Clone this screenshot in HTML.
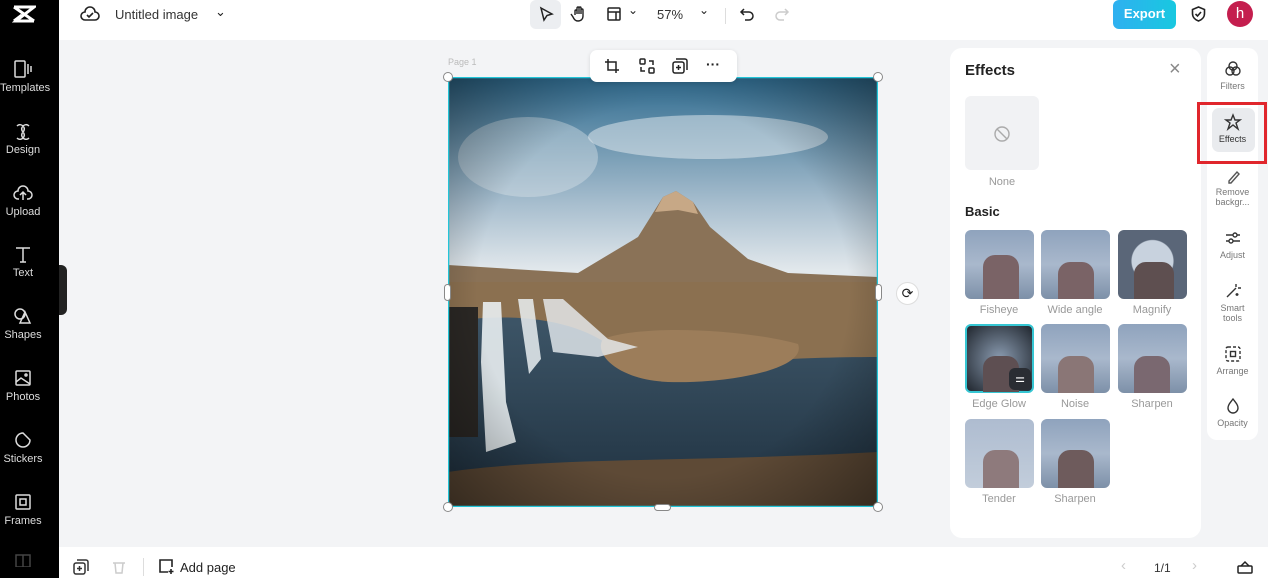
<!DOCTYPE html>
<html><head><style>
*{margin:0;padding:0;box-sizing:border-box}
body{width:1268px;height:578px;overflow:hidden;background:#f3f4f6;font-family:"Liberation Sans",sans-serif;position:relative;color:#222}
.abs{position:absolute}
.side{left:0;top:0;width:59px;height:578px;background:#000}
.si{position:absolute;left:0;width:46px;text-align:center;color:#ddd;font-size:11px}
.si svg{display:block;margin:0 auto 4px}
.top{left:59px;top:0;width:1209px;height:40px;background:#fff}
.bot{left:59px;top:547px;width:1209px;height:31px;background:#fff}
.panel{left:950px;top:48px;width:251px;height:490px;background:#fff;border-radius:12px}
.rail{left:1207px;top:48px;width:51px;height:392px;background:#fff;border-radius:10px}
.ri{position:absolute;left:1207px;width:51px;text-align:center;font-size:9px;color:#777;line-height:10px}
.ri svg{display:block;margin:0 auto 3px}
.th{position:absolute;width:69px;height:69px;border-radius:6px;overflow:hidden;background:linear-gradient(#8fa3bd,#a9b8cc 50%,#7d90a8)}
.lb{position:absolute;width:80px;text-align:center;font-size:11px;color:#999}
</style></head><body>
<div class="abs side"></div>
<svg class="abs" style="left:12px;top:4px" width="24" height="20" viewBox="0 0 24 20"><path d="M2 3h20L4 17h18M2 3l20 14M2 17l8-6" stroke="#fff" stroke-width="3" fill="none"/></svg>
<div class="si" style="top:60px"><svg width="20" height="18" viewBox="0 0 20 18" fill="none" stroke="#ddd" stroke-width="1.5"><rect x="2" y="1" width="10" height="16" rx="1"/><path d="M15 4v10M18 6v6"/></svg>Templates</div>
<div class="si" style="top:122px"><svg width="20" height="18" viewBox="0 0 20 18" fill="none" stroke="#ddd" stroke-width="1.5"><path d="M4 4c4-4 10 2 6 6s2 10 6 6M16 4C12 0 6 6 10 10s-2 10-6 6"/></svg>Design</div>
<div class="si" style="top:184px"><svg width="20" height="18" viewBox="0 0 20 18" fill="none" stroke="#ddd" stroke-width="1.5"><path d="M6 15H5a4 4 0 010-8 5 5 0 0110 0 4 4 0 010 8h-1M10 16V9M7 11l3-3 3 3"/></svg>Upload</div>
<div class="si" style="top:245px"><svg width="20" height="18" viewBox="0 0 20 18" fill="none" stroke="#ddd" stroke-width="1.5"><path d="M3 3h14M10 3v14M7 17h6"/></svg>Text</div>
<div class="si" style="top:307px"><svg width="20" height="18" viewBox="0 0 20 18" fill="none" stroke="#ddd" stroke-width="1.5"><circle cx="7" cy="7" r="5"/><path d="M12 5l5 11H7z"/></svg>Shapes</div>
<div class="si" style="top:369px"><svg width="20" height="18" viewBox="0 0 20 18" fill="none" stroke="#ddd" stroke-width="1.5"><rect x="3" y="2" width="14" height="14" rx="1"/><path d="M3 13l5-4 9 6"/><circle cx="13" cy="6" r="1"/></svg>Photos</div>
<div class="si" style="top:431px"><svg width="20" height="18" viewBox="0 0 20 18" fill="none" stroke="#ddd" stroke-width="1.5"><path d="M10 2a7 7 0 107 7l-7-7z"/></svg>Stickers</div>
<div class="si" style="top:493px"><svg width="20" height="18" viewBox="0 0 20 18" fill="none" stroke="#ddd" stroke-width="1.5"><rect x="3" y="2" width="14" height="14" rx="1"/><rect x="7" y="6" width="6" height="6"/></svg>Frames</div>
<svg class="abs" style="left:14px;top:553px" width="18" height="14" viewBox="0 0 18 14" fill="none" stroke="#444" stroke-width="1.5"><rect x="2" y="2" width="14" height="12"/><path d="M9 2v12"/></svg>
<div class="abs" style="left:59px;top:265px;width:8px;height:50px;background:#222;border-radius:0 6px 6px 0"></div>

<div class="abs top"></div>
<svg class="abs" style="left:80px;top:5px" width="20" height="18" viewBox="0 0 20 18" fill="none" stroke="#222" stroke-width="1.6"><path d="M6 15H5a4 4 0 010-8 5 5 0 0110 0 4 4 0 010 8zM7 10l2 2 4-4"/></svg>
<div class="abs" style="left:115px;top:7px;font-size:13px;color:#333">Untitled image</div>
<div class="abs" style="left:215px;top:4px;font-size:13px">⌄</div>
<div class="abs" style="left:530px;top:0;width:31px;height:29px;background:#eceef1;border-radius:6px"></div>
<svg class="abs" style="left:538px;top:6px" width="16" height="16" viewBox="0 0 16 16" fill="none" stroke="#222" stroke-width="1.5"><path d="M3 2l11 6-5 1.5L6 14z"/></svg>
<svg class="abs" style="left:570px;top:5px" width="18" height="18" viewBox="0 0 18 18" fill="none" stroke="#222" stroke-width="1.4"><path d="M5 10V6a1 1 0 012 0v3V3a1 1 0 012 0v6V3a1 1 0 012 0v6V5a1 1 0 012 0v6c0 3-2 5-5 5s-4-2-5-4l-2-3"/></svg>
<svg class="abs" style="left:606px;top:6px" width="16" height="16" viewBox="0 0 16 16" fill="none" stroke="#222" stroke-width="1.5"><rect x="2" y="2" width="12" height="12" rx="1"/><path d="M2 6h12M10 6v8"/></svg>
<div class="abs" style="left:628px;top:3px;font-size:12px">⌄</div>
<div class="abs" style="left:657px;top:7px;font-size:13px;color:#333">57%</div>
<div class="abs" style="left:699px;top:3px;font-size:12px">⌄</div>
<div class="abs" style="left:725px;top:8px;width:1px;height:16px;background:#ddd"></div>
<svg class="abs" style="left:739px;top:6px" width="16" height="16" viewBox="0 0 16 16" fill="none" stroke="#222" stroke-width="1.5"><path d="M5 3L2 6l3 3M2 6h8a4 4 0 010 8H6"/></svg>
<svg class="abs" style="left:774px;top:6px" width="16" height="16" viewBox="0 0 16 16" fill="none" stroke="#ccc" stroke-width="1.5"><path d="M11 3l3 3-3 3M14 6H6a4 4 0 000 8h4"/></svg>
<div class="abs" style="left:1113px;top:0;width:63px;height:29px;background:linear-gradient(90deg,#2fb0f0,#18c8e0);border-radius:6px;color:#fff;font-weight:bold;font-size:13px;text-align:center;line-height:28px">Export</div>
<svg class="abs" style="left:1190px;top:5px" width="17" height="18" viewBox="0 0 17 18" fill="none" stroke="#222" stroke-width="1.6"><path d="M8.5 2l6 2.5v4c0 4-3 6.5-6 7.5-3-1-6-3.5-6-7.5v-4zM5.5 9l2 2 3.5-4"/></svg>
<div class="abs" style="left:1227px;top:1px;width:26px;height:26px;border-radius:50%;background:#c41e4e;color:#fff;font-size:15px;text-align:center;line-height:25px">h</div>

<div class="abs" style="left:448px;top:57px;font-size:9px;color:#bbb">Page 1</div>
<svg class="abs" style="left:448px;top:77px" width="430" height="430" viewBox="0 0 430 430">
<defs><linearGradient id="sky" x1="0" y1="0" x2="0" y2="1"><stop offset="0" stop-color="#2f6b8f"/><stop offset=".3" stop-color="#a9bfcf"/><stop offset=".45" stop-color="#e2e8ec"/></linearGradient>
<linearGradient id="wat" x1="0" y1="0" x2="0" y2="1"><stop offset="0" stop-color="#3d5567"/><stop offset="1" stop-color="#1f3140"/></linearGradient>
<radialGradient id="vig" cx=".5" cy=".5" r=".72"><stop offset=".6" stop-color="#000" stop-opacity="0"/><stop offset="1" stop-color="#000" stop-opacity=".45"/></radialGradient></defs>
<rect width="430" height="430" fill="url(#sky)"/>
<ellipse cx="260" cy="60" rx="120" ry="22" fill="#e8eef2" opacity=".5"/>
<ellipse cx="80" cy="80" rx="70" ry="40" fill="#dfe7ec" opacity=".4"/>
<path d="M0 188L130 196 190 160 215 120 228 114 245 125 262 150 300 182 340 196 430 200V430H0z" fill="#8a7257"/>
<path d="M207 135l8-15 13-6 17 11 5 12-20-4z" fill="#c7a886"/>
<path d="M0 205h430v225H0z" fill="#8b7050"/>
<path d="M0 245c60-10 130-5 170 30 30 25 100 5 260 5V430H0z" fill="url(#wat)"/>
<path d="M155 262c40-15 140-10 195 5 10 25-70 40-130 38-50-2-75-28-65-43z" fill="#9c7d5a"/>
<path d="M35 225h18l5 100 10 40-30 10-5-90z" fill="#e9eef1" opacity=".9"/>
<path d="M70 222h15l8 60-12 15z" fill="#e9eef1" opacity=".85"/>
<path d="M95 222h20l45 40 30 8-40 10-45-5z" fill="#e9eef1" opacity=".8"/>
<path d="M0 230h30v130H0z" fill="#2a2724"/>
<path d="M0 395c100-15 250-10 430-20V430H0z" fill="#5e4a36"/>
<rect width="430" height="430" fill="url(#vig)"/>
<rect x=".5" y=".5" width="429" height="429" fill="none" stroke="#22c5d8" stroke-width="1.5"/>
</svg>
<div class="abs" style="left:443px;top:72px;width:10px;height:10px;border-radius:50%;background:#fff;border:1px solid #888"></div>
<div class="abs" style="left:873px;top:72px;width:10px;height:10px;border-radius:50%;background:#fff;border:1px solid #888"></div>
<div class="abs" style="left:443px;top:502px;width:10px;height:10px;border-radius:50%;background:#fff;border:1px solid #888"></div>
<div class="abs" style="left:873px;top:502px;width:10px;height:10px;border-radius:50%;background:#fff;border:1px solid #888"></div>
<div class="abs" style="left:444px;top:284px;width:7px;height:17px;border-radius:4px;background:#fff;border:1px solid #888"></div>
<div class="abs" style="left:875px;top:284px;width:7px;height:17px;border-radius:4px;background:#fff;border:1px solid #888"></div>
<div class="abs" style="left:654px;top:504px;width:17px;height:7px;border-radius:4px;background:#fff;border:1px solid #888"></div>
<div class="abs" style="left:896px;top:282px;width:23px;height:23px;border-radius:50%;background:#fff;border:1px solid #ddd;text-align:center;font-size:14px;line-height:21px">⟳</div>
<div class="abs" style="left:590px;top:50px;width:147px;height:32px;background:#fff;border-radius:7px;box-shadow:0 1px 4px rgba(0,0,0,.12)"></div>
<svg class="abs" style="left:604px;top:58px" width="16" height="16" viewBox="0 0 16 16" fill="none" stroke="#222" stroke-width="1.5"><path d="M4 1v11h11M1 4h11v11"/></svg>
<svg class="abs" style="left:639px;top:58px" width="16" height="16" viewBox="0 0 16 16" fill="none" stroke="#222" stroke-width="1.5"><rect x="1" y="1" width="5" height="5" rx="1"/><rect x="10" y="10" width="5" height="5" rx="1"/><path d="M10 3h4v4M6 13H2V9"/></svg>
<svg class="abs" style="left:672px;top:58px" width="16" height="16" viewBox="0 0 16 16" fill="none" stroke="#222" stroke-width="1.5"><rect x="1" y="4" width="11" height="11" rx="2"/><path d="M4 1h9a2 2 0 012 2v9M6.5 7v5M4 9.5h5"/></svg>
<div class="abs" style="left:706px;top:56px;font-size:14px;font-weight:bold">···</div>

<div class="abs panel"></div>
<div class="abs" style="left:965px;top:62px;font-size:15px;font-weight:bold">Effects</div>
<div class="abs" style="left:1169px;top:58px;font-size:20px;color:#888">×</div>
<div class="abs" style="left:965px;top:96px;width:74px;height:74px;background:#f1f2f4;border-radius:6px"></div>
<svg class="abs" style="left:993px;top:125px" width="18" height="18" viewBox="0 0 18 18" fill="none" stroke="#aaa" stroke-width="1.4"><circle cx="9" cy="9" r="7"/><path d="M4 4l10 10"/></svg>
<div class="lb" style="left:962px;top:176px">None</div>
<div class="abs" style="left:965px;top:204px;font-size:13px;font-weight:bold">Basic</div>
<div class="th" style="left:965px;top:230px"></div><div class="lb" style="left:959px;top:304px">Fisheye</div>
<div class="th" style="left:1041px;top:230px"></div><div class="lb" style="left:1035px;top:304px">Wide angle</div>
<div class="th" style="left:1118px;top:230px;background:radial-gradient(circle at 50% 45%,#c8d2de 40%,#5a6678 42%)"></div><div class="lb" style="left:1112px;top:304px">Magnify</div>
<div class="th" style="left:965px;top:324px;border:2px solid #36c6d3;background:radial-gradient(#8a9bb0,#20262e)"></div><div class="lb" style="left:959px;top:398px">Edge Glow</div>
<div class="th" style="left:1041px;top:324px"></div><div class="lb" style="left:1035px;top:398px">Noise</div>
<div class="th" style="left:1118px;top:324px"></div><div class="lb" style="left:1112px;top:398px">Sharpen</div>
<div class="th" style="left:965px;top:419px;background:linear-gradient(#aebcd0,#c2cddb)"></div><div class="lb" style="left:959px;top:493px">Tender</div>
<div class="th" style="left:1041px;top:419px"></div><div class="lb" style="left:1035px;top:493px">Sharpen</div>
<div class="abs" style="left:983px;top:255px;width:36px;height:44px;background:#7a6366;border-radius:12px 12px 0 0"></div>
<div class="abs" style="left:1058px;top:262px;width:36px;height:37px;background:#7a6366;border-radius:12px 12px 0 0"></div>
<div class="abs" style="left:1134px;top:262px;width:40px;height:37px;background:#5e4f50;border-radius:12px 12px 0 0"></div>
<div class="abs" style="left:983px;top:356px;width:36px;height:36px;background:#5e4f52;border-radius:12px 12px 0 0"></div>
<div class="abs" style="left:1058px;top:356px;width:36px;height:37px;background:#8a7676;border-radius:12px 12px 0 0"></div>
<div class="abs" style="left:1134px;top:356px;width:36px;height:37px;background:#7a6870;border-radius:12px 12px 0 0"></div>
<div class="abs" style="left:983px;top:450px;width:36px;height:38px;background:#8e7a7c;border-radius:12px 12px 0 0"></div>
<div class="abs" style="left:1058px;top:450px;width:36px;height:38px;background:#6e5b5c;border-radius:12px 12px 0 0"></div>
<div class="abs" style="left:1009px;top:368px;width:22px;height:22px;border-radius:6px;background:#2a2d33;color:#fff;font-size:11px;text-align:center;line-height:22px">⚌</div>

<div class="abs rail"></div>
<div class="abs" style="left:1212px;top:108px;width:43px;height:44px;background:#e9ebee;border-radius:7px"></div>
<div class="abs" style="left:1197px;top:102px;width:70px;height:62px;border:3px solid #e0262c"></div>
<div class="ri" style="top:60px"><svg width="18" height="18" viewBox="0 0 18 18" fill="none" stroke="#333" stroke-width="1.4"><circle cx="9" cy="6" r="4"/><circle cx="6" cy="11" r="4"/><circle cx="12" cy="11" r="4"/></svg>Filters</div>
<div class="ri" style="top:113px;color:#333"><svg width="18" height="18" viewBox="0 0 18 18" fill="none" stroke="#333" stroke-width="1.4"><path d="M9 2l2 5h5l-4 3 2 6-5-4-5 4 2-6-4-3h5z"/></svg>Effects</div>
<div class="ri" style="top:168px"><svg width="18" height="16" viewBox="0 0 18 16" fill="none" stroke="#555" stroke-width="1.4"><path d="M5 13l8-9 2 2-8 9H5z"/></svg>Remove<br>backgr...</div>
<div class="ri" style="top:229px"><svg width="18" height="18" viewBox="0 0 18 18" fill="none" stroke="#333" stroke-width="1.4"><path d="M2 6h14M2 12h14"/><circle cx="11" cy="6" r="2" fill="#fff"/><circle cx="7" cy="12" r="2" fill="#fff"/></svg>Adjust</div>
<div class="ri" style="top:282px"><svg width="18" height="18" viewBox="0 0 18 18" fill="none" stroke="#333" stroke-width="1.4"><path d="M3 15l9-9M12 2v3M14 6h3M13 11v3M11.5 12.5h3"/></svg>Smart<br>tools</div>
<div class="ri" style="top:345px"><svg width="18" height="18" viewBox="0 0 18 18" fill="none" stroke="#333" stroke-width="1.4" stroke-dasharray="3 2"><rect x="2" y="2" width="14" height="14" rx="2"/><rect x="6.5" y="6.5" width="5" height="5" stroke-dasharray="0"/></svg>Arrange</div>
<div class="ri" style="top:397px"><svg width="18" height="18" viewBox="0 0 18 18" fill="none" stroke="#333" stroke-width="1.4"><path d="M9 2c3 4 5 6 5 9a5 5 0 01-10 0c0-3 2-5 5-9z"/></svg>Opacity</div>

<div class="abs bot"></div>
<svg class="abs" style="left:73px;top:559px" width="16" height="16" viewBox="0 0 16 16" fill="none" stroke="#333" stroke-width="1.5"><rect x="1" y="4" width="11" height="11" rx="2"/><path d="M4 1h9a2 2 0 012 2v9M6.5 7v5M4 9.5h5"/></svg>
<svg class="abs" style="left:111px;top:559px" width="16" height="16" viewBox="0 0 16 16" fill="none" stroke="#ccc" stroke-width="1.5"><path d="M2 4h12M4 4l1 10h6l1-10"/></svg>
<div class="abs" style="left:143px;top:558px;width:1px;height:18px;background:#ddd"></div>
<svg class="abs" style="left:158px;top:558px" width="17" height="17" viewBox="0 0 17 17" fill="none" stroke="#222" stroke-width="1.6"><path d="M10 14H2V2h12v7M13 11v5M10.5 13.5h5"/></svg>
<div class="abs" style="left:180px;top:560px;font-size:13px;color:#222">Add page</div>
<div class="abs" style="left:1121px;top:557px;font-size:15px;color:#ccc">‹</div>
<div class="abs" style="left:1154px;top:561px;font-size:12px;color:#333">1/1</div>
<div class="abs" style="left:1192px;top:557px;font-size:15px;color:#ccc">›</div>
<svg class="abs" style="left:1237px;top:560px" width="16" height="14" viewBox="0 0 16 14" fill="none" stroke="#222" stroke-width="1.5"><rect x="1" y="6" width="14" height="7" rx="1"/><path d="M4 6l4-4 4 4"/></svg>
</body></html>
